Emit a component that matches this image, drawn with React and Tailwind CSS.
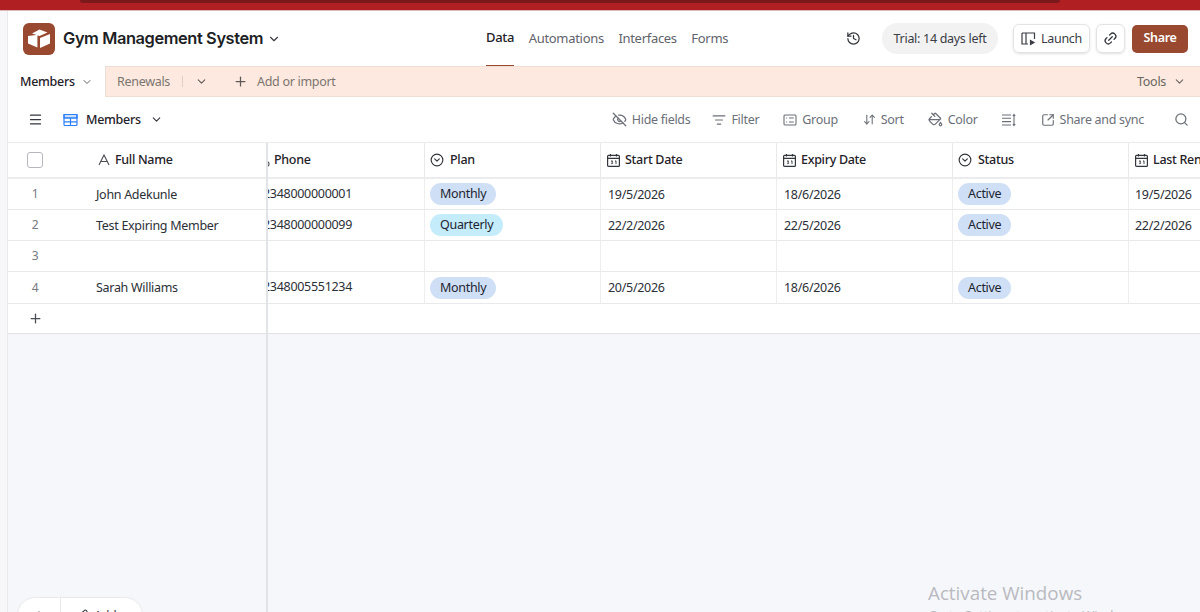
import React from 'react';
import {
  ChevronDown, Plus, Menu, EyeOff, ListFilter, ArrowDownUp, PaintBucket,
  SquareArrowOutUpRight, Search, CircleChevronDown, History, Link2, Phone, Pencil,
} from 'lucide-react';

const CalendarIcon = () => (
  <svg width="15" height="15" viewBox="0 0 15 15" fill="none" stroke="#33363d" strokeWidth="1.2" className="shrink-0">
    <rect x="1.6" y="2.4" width="11.8" height="11" rx="1" />
    <path d="M1.6 5.4h11.8M4.5 1v2.6M10.5 1v2.6" />
    <path d="M5 8h1.6L5.6 9.2c1 0 1.2.4 1.2.8 0 .6-.8.9-1.8.5M9 8.2l1-.4v3.2" strokeWidth="0.9" />
  </svg>
);

const TextIcon = () => (
  <svg width="12" height="12" viewBox="0 0 12 12" fill="none" stroke="#4a4d55" strokeWidth="1.1" className="shrink-0">
    <path d="M1 11 6 1l5 10M3 7.5h6" />
  </svg>
);

const Logo = () => (
  <div className="w-[32px] h-[32px] rounded-[6px] bg-[#98492f] flex items-center justify-center shrink-0">
    <svg width="24" height="22" viewBox="0 0 24 22" fill="white">
      <path d="M12.5 1.5 20.5 4.5 12.5 8 5 5.5z" />
      <path d="M1 8 11 6.8l-.6 1.8V19.5L1 15.5z" />
      <path d="M13 10 23 6v9.5l-10 4.5z" />
    </svg>
  </div>
);

const LaunchIcon = () => (
  <svg width="15" height="15" viewBox="0 0 15 15" fill="none" stroke="#3a3d45" strokeWidth="1.2" className="shrink-0">
    <path d="M1 2h12.5v6M1 2v11h6M5 2v11" />
    <path d="M9.5 9.5v4l3.5-2z" fill="#3a3d45" />
  </svg>
);

const GroupIcon = () => (
  <svg width="14" height="14" viewBox="0 0 14 14" fill="none" stroke="#6b6f78" strokeWidth="1.1" className="shrink-0">
    <rect x="1" y="2" width="12" height="10" rx="1" />
    <path d="M3.2 5h1M6 5h4.8M3.2 9h1M6 9h4.8" />
  </svg>
);

const RowHeightIcon = () => (
  <svg width="16" height="14" viewBox="0 0 16 14" fill="none" stroke="#6b6f78" strokeWidth="1.1" className="shrink-0">
    <path d="M1 2h9M1 5.3h9M1 8.6h9M1 12h9M13 1.5v11M11.8 3 13 1.5 14.2 3M11.8 11 13 12.5 14.2 11" />
  </svg>
);

const TableIcon = () => (
  <svg width="15" height="14" viewBox="0 0 15 14" fill="none" stroke="#2d7ff9" strokeWidth="1.2" className="shrink-0">
    <rect x="1" y="1.5" width="13" height="11" rx="1" />
    <path d="M1 5h13M1 8.8h13M7.5 5v7.5" />
    <path d="M1 1.5h13V5H1z" fill="#2d7ff9" fillOpacity="0.25" />
  </svg>
);

const columns = [
  { name: 'Plan', type: 'select' },
  { name: 'Start Date', type: 'date' },
  { name: 'Expiry Date', type: 'date' },
  { name: 'Status', type: 'select' },
  { name: 'Last Renewal', type: 'date' },
];

const rows = [
  { id: 1, name: 'John Adekunle', phone: '2348000000001', plan: 'Monthly', start: '19/5/2026', expiry: '18/6/2026', status: 'Active', last: '19/5/2026', h: 'h-[31px]' },
  { id: 2, name: 'Test Expiring Member', phone: '2348000000099', plan: 'Quarterly', start: '22/2/2026', expiry: '22/5/2026', status: 'Active', last: '22/2/2026', h: 'h-[31px]' },
  { id: 3, name: '', phone: '', plan: '', start: '', expiry: '', status: '', last: '', h: 'h-[31px]' },
  { id: 4, name: 'Sarah Williams', phone: '2348005551234', plan: 'Monthly', start: '20/5/2026', expiry: '18/6/2026', status: 'Active', last: '', h: 'h-[32px]' },
];

const Pill = ({ label }) => {
  if (!label) return null;
  return (
    <span className={`px-[10px] h-[22px] leading-[21px] rounded-full text-[#1d2530] ${label === 'Quarterly' ? 'bg-[#c4ecfb]' : 'bg-[#cfdff6]'}`}>
      {label}
    </span>
  );
};

const ToolButton = ({ icon, label, className = '' }) => (
  <div className={`flex items-center gap-[5px] text-[#6b6f78] ${className}`}>
    {icon}
    <span className="translate-y-[1px]">{label}</span>
  </div>
);

export default function App() {
  return (
    <div className="w-[1200px] h-[612px] overflow-hidden relative flex flex-col bg-white text-[12.5px] tracking-[-0.3px] text-[#1d1f25] font-['Noto_Sans',sans-serif]">
      <div className="h-[11px] shrink-0 bg-[#b01f22] border-b border-[#d9b9b9]">
        <div className="ml-[80px] w-[980px] h-[3px] bg-[#7c191c] rounded-b-md" />
      </div>

      <div className="flex flex-1 min-h-0">
        <div className="w-[8px] shrink-0 bg-[#f7f7f9] border-r border-[#e9e9ec]" />

        <div className="flex-1 min-w-0 flex flex-col">
          {/* top header */}
          <div className="h-[55px] shrink-0 flex items-center pl-[15px] pr-[12px] relative">
            <Logo />
            <span className="ml-[8px] text-[16.4px] font-semibold tracking-[-0.4px] font-['Inter',sans-serif]">Gym Management System</span>
            <ChevronDown size={14} className="ml-[4px] text-[#3a3d45]" />

            <div className="absolute left-[478px] top-0 h-full flex items-center gap-[14.5px] text-[13px]">
              <div className="h-full flex items-center font-medium text-[#1f2228] border-b-[1px] border-[#98492f]">Data</div>
              <span className="text-[#5f636b]">Automations</span>
              <span className="text-[#5f636b]">Interfaces</span>
              <span className="text-[#5f636b]">Forms</span>
            </div>

            <div className="ml-auto flex items-center">
              <History size={15} className="text-[#33363d] mr-[21px]" />
              <div className="h-[31px] w-[116px] rounded-full bg-[#f2f2f3] flex items-center justify-center text-[#3a3d45] mr-[15px]">
                <span className="translate-y-[1px]">Trial: 14 days left</span>
              </div>
              <div className="h-[29px] w-[77px] rounded-[6px] border border-[#e3e3e6] shadow-sm flex items-center justify-center gap-[5px] text-[#3a3d45] mr-[6px]">
                <LaunchIcon />
                <span className="translate-y-[1px]">Launch</span>
              </div>
              <div className="w-[29px] h-[29px] rounded-[6px] border border-[#e3e3e6] shadow-sm flex items-center justify-center mr-[7px]">
                <Link2 size={15} className="text-[#33363d] -rotate-45" />
              </div>
              <div className="h-[28px] w-[56px] rounded-[5px] bg-[#98492f] flex items-center justify-center text-white font-semibold">Share</div>
            </div>
          </div>

          {/* table tabs */}
          <div className="h-[31px] shrink-0 flex items-stretch bg-[#fde9df] border-y border-[#f0ddd3] pr-[14px]">
            <div className="w-[98px] -mt-px -mb-px bg-white border-r border-[#eadfd9] flex items-center pl-[12px] gap-[6px] font-medium text-[#1f2228]">
              <span className="translate-y-[1px]">Members</span>
              <ChevronDown size={12} className="text-[#5f636b]" />
            </div>
            <div className="flex items-center text-[#7b7570] pl-[11px]">
              <span className="translate-y-[1px]">Renewals</span>
              <span className="w-px h-[11px] bg-[#e0cfc6] ml-[12px]" />
              <ChevronDown size={13} className="ml-[12px] text-[#5f5a56]" />
              <Plus size={15} className="ml-[25px] text-[#5f5a56]" />
              <span className="ml-[9px] translate-y-[1px]">Add or import</span>
            </div>
            <div className="ml-auto flex items-center gap-[7px] text-[#6a6560]">
              <span className="translate-y-[1px]">Tools</span>
              <ChevronDown size={13} />
            </div>
          </div>

          {/* view bar */}
          <div className="h-[46px] shrink-0 flex items-center pl-[20px] pr-[11px] border-b border-[#ececef]">
            <Menu size={15} className="text-[#33363d]" />
            <div className="ml-[20px]"><TableIcon /></div>
            <span className="ml-[8px] font-medium text-[#1f2228] translate-y-[1px]">Members</span>
            <ChevronDown size={13} className="ml-[9px] text-[#33363d]" />
            <div className="ml-auto flex items-center">
              <ToolButton icon={<EyeOff size={15} />} label="Hide fields" className="mr-[22px]" />
              <ToolButton icon={<ListFilter size={14} />} label="Filter" className="mr-[24px]" />
              <ToolButton icon={<GroupIcon />} label="Group" className="mr-[25px]" />
              <ToolButton icon={<ArrowDownUp size={13} />} label="Sort" className="mr-[24px]" />
              <ToolButton icon={<PaintBucket size={15} />} label="Color" className="mr-[23px]" />
              <RowHeightIcon />
              <ToolButton icon={<SquareArrowOutUpRight size={14} />} label="Share and sync" className="ml-[24px] mr-[30px]" />
              <Search size={15} className="text-[#6b6f78]" />
            </div>
          </div>

          {/* grid */}
          <div className="flex-1 min-h-0 bg-[#f6f7fb] flex relative">
            <div className="w-[260px] shrink-0 z-10 border-r-[2px] border-[#e2e3e7] flex flex-col">
              <div className="h-[36px] bg-white border-b-[2px] border-[#ececef] flex items-center font-medium text-[#1f2228]">
                <div className="w-[90px] pl-[19px] shrink-0">
                  <div className="w-[16px] h-[16px] rounded-[3px] border border-[#b5b7bc]" />
                </div>
                <TextIcon />
                <span className="ml-[5px]">Full Name</span>
              </div>
              {rows.map((row) => (
                <div key={row.id} className={`${row.h} bg-white border-b border-[#e9e9ec] flex items-center`}>
                  <span className="w-[54px] text-center text-[12px] text-[#767a82] shrink-0">{row.id}</span>
                  <span className="ml-[34px] text-[#2c2f36] translate-y-[1px]">{row.name}</span>
                </div>
              ))}
              <div className="h-[30px] bg-white border-b border-[#e3e3e6] flex items-center pl-[20px]">
                <Plus size={15} className="text-[#4a4d55]" />
              </div>
            </div>

            <div className="flex-1 min-w-0 overflow-hidden flex flex-col">
              <div className="h-[36px] bg-white border-b-[2px] border-[#ececef] flex font-medium text-[#1f2228]">
                <div className="w-[157px] shrink-0 border-r border-[#e9e9ec] flex items-center overflow-hidden">
                  <Phone size={13} className="-ml-[11px] text-[#4a4d55] shrink-0" />
                  <span className="ml-[4px]">Phone</span>
                </div>
                {columns.map((col) => (
                  <div key={col.name} className={`w-[176px] shrink-0 border-r border-[#e9e9ec] flex items-center whitespace-nowrap ${col.type === 'date' ? 'pl-[5px] gap-[4px]' : 'pl-[5px] gap-[6px]'}`}>
                    {col.type === 'date' ? <CalendarIcon /> : <CircleChevronDown size={14} className="text-[#33363d] shrink-0" />}
                    <span>{col.name}</span>
                  </div>
                ))}
              </div>
              {rows.map((row) => (
                <div key={row.id} className={`${row.h} bg-white border-b border-[#e9e9ec] flex items-center text-[#2c2f36]`}>
                  <div className="w-[157px] h-full shrink-0 border-r border-[#eeeef0] flex items-center overflow-hidden">
                    <span className="-ml-[5px]">{row.phone}</span>
                  </div>
                  <div className="w-[176px] h-full shrink-0 border-r border-[#eeeef0] flex items-center pl-[5px]"><Pill label={row.plan} /></div>
                  <div className="w-[176px] h-full shrink-0 border-r border-[#eeeef0] flex items-center pl-[7px]"><span className="translate-y-[1px]">{row.start}</span></div>
                  <div className="w-[176px] h-full shrink-0 border-r border-[#eeeef0] flex items-center pl-[7px]"><span className="translate-y-[1px]">{row.expiry}</span></div>
                  <div className="w-[176px] h-full shrink-0 border-r border-[#eeeef0] flex items-center pl-[5px]"><Pill label={row.status} /></div>
                  <div className="w-[176px] h-full shrink-0 flex items-center pl-[6px]"><span className="translate-y-[1px]">{row.last}</span></div>
                </div>
              ))}
              <div className="h-[30px] bg-white border-b border-[#e3e3e6]" />
            </div>
          </div>
        </div>
      </div>

      {/* floating add button, cut off by the window */}
      <div className="absolute left-[17px] top-[597px] w-[126px] h-[40px] z-20 bg-white rounded-[18px] border border-[#e9e9ec] flex text-[#3a3d45]">
        <div className="w-[43px] border-r border-[#e9e9ec] flex justify-center pt-[11px]"><Plus size={14} /></div>
        <div className="flex gap-[6px] pl-[14px] pt-[9px]">
          <Pencil size={13} className="mt-[2px]" />
          <span>Add...</span>
        </div>
      </div>

      {/* watermark */}
      <div className="absolute left-[928px] top-[580px] z-20 text-[#b9bac0] tracking-normal font-['Open_Sans',sans-serif] pointer-events-none">
        <div className="text-[18.8px] leading-[26px]">Activate Windows</div>
        <div className="text-[13px] leading-[18px]">Go to Settings to activate Windows.</div>
      </div>
    </div>
  );
}
